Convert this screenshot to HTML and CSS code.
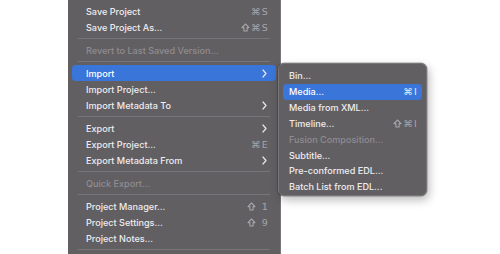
FILE: index.html
```html
<!DOCTYPE html>
<html>
<head>
<meta charset="utf-8">
<link rel="stylesheet" href="styles.css">
</head>
<body>
<div class="stage">
  <div class="menu main">
    <div class="item"><span class="label">Save Project</span><span class="key">⌘S</span></div>
    <div class="item"><span class="label">Save Project As...</span><span class="key"><svg class="shift" viewBox="0 0 9 9"><path d="M4.5 1L8 4.6H6.1V8H2.9V4.6H1Z"/></svg>⌘S</span></div>
    <div class="sep"></div>
    <div class="item disabled"><span class="label">Revert to Last Saved Version...</span></div>
    <div class="sep"></div>
    <div class="item active"><span class="label">Import</span><svg class="chev" viewBox="0 0 5 9"><path d="M1 1l3 3.5L1 8"/></svg></div>
    <div class="item"><span class="label">Import Project...</span></div>
    <div class="item"><span class="label">Import Metadata To</span><svg class="chev" viewBox="0 0 5 9"><path d="M1 1l3 3.5L1 8"/></svg></div>
    <div class="sep"></div>
    <div class="item"><span class="label">Export</span><svg class="chev" viewBox="0 0 5 9"><path d="M1 1l3 3.5L1 8"/></svg></div>
    <div class="item"><span class="label">Export Project...</span><span class="key">⌘E</span></div>
    <div class="item"><span class="label">Export Metadata From</span><svg class="chev" viewBox="0 0 5 9"><path d="M1 1l3 3.5L1 8"/></svg></div>
    <div class="sep"></div>
    <div class="item disabled"><span class="label">Quick Export...</span></div>
    <div class="sep"></div>
    <div class="item"><span class="label">Project Manager...</span><span class="key"><svg class="shift" viewBox="0 0 9 9"><path d="M4.5 1L8 4.6H6.1V8H2.9V4.6H1Z"/></svg> 1</span></div>
    <div class="item"><span class="label">Project Settings...</span><span class="key"><svg class="shift" viewBox="0 0 9 9"><path d="M4.5 1L8 4.6H6.1V8H2.9V4.6H1Z"/></svg> 9</span></div>
    <div class="item"><span class="label">Project Notes...</span></div>
    <div class="sep"></div>
  </div>
  <div class="menu sub">
    <div class="item"><span class="label">Bin...</span></div>
    <div class="item active"><span class="label">Media...</span><span class="key">⌘I</span></div>
    <div class="item"><span class="label">Media from XML...</span></div>
    <div class="item"><span class="label">Timeline...</span><span class="key"><svg class="shift" viewBox="0 0 9 9"><path d="M4.5 1L8 4.6H6.1V8H2.9V4.6H1Z"/></svg>⌘I</span></div>
    <div class="item disabled"><span class="label">Fusion Composition...</span></div>
    <div class="item"><span class="label">Subtitle...</span></div>
    <div class="item"><span class="label">Pre-conformed EDL...</span></div>
    <div class="item"><span class="label">Batch List from EDL...</span></div>
  </div>
</div>
</body>
</html>
```

FILE: styles.css
```css
html, body {
  margin: 0;
  padding: 0;
  background: #ffffff;
}
.stage {
  position: relative;
  width: 500px;
  height: 254px;
  overflow: hidden;
  font-family: "Inter", "Liberation Sans", sans-serif;
  font-size: 9.1px;
  font-weight: 500;
  color: #eeedef;
}
.menu {
  background: #625f63;
  box-sizing: border-box;
}
.main {
  margin-left: 68px;
  width: 213px;
  height: 254px;
  padding: 3px 4px 0 4px;
  border-right: 1px solid #77747a;
}
.item {
  height: 16px;
  display: flex;
  align-items: center;
  padding: 0 8px 0 14px;
  border-radius: 4px;
}
.item .label {
  flex: 1;
  white-space: nowrap;
}
.item.active {
  background: #3a75da;
  color: #ffffff;
}
.item.disabled {
  color: #8f8c91;
}
.key {
  display: flex;
  align-items: center;
  white-space: pre;
  color: #a8a5aa;
  font-family: "DejaVu Sans", "Inter", sans-serif;
  font-weight: 400;
  font-size: 9.5px;
  letter-spacing: 1.2px;
  margin-right: -1px;
}
.shift {
  width: 9px;
  height: 9px;
  margin-right: 1.5px;
  fill: none;
  stroke: #a8a5aa;
  stroke-width: 1.1;
  stroke-linejoin: round;
}
.active .key {
  color: #e6ecf8;
}
.chev {
  width: 5px;
  height: 9px;
  fill: none;
  stroke: #e6e5e7;
  stroke-width: 1.2;
  stroke-linecap: round;
  stroke-linejoin: round;
  margin-right: 1px;
}
.sep {
  height: 7px;
  display: flex;
  align-items: center;
  padding: 0 6px;
}
.sep::before {
  content: "";
  flex: 1;
  height: 1px;
  background: #78757a;
}
.sub {
  position: absolute;
  left: 278px;
  top: 63px;
  width: 149px;
  height: 133px;
  padding: 4px 4px 0 4px;
  border-radius: 6px;
  border: 1px solid #78757a;
  box-shadow: 0 0 0 0.5px rgba(0,0,0,0.35), 2px 4px 10px rgba(0,0,0,0.28);
}
.sub .item {
  height: 15.85px;
  padding: 0 5px 0 6px;
}
```
